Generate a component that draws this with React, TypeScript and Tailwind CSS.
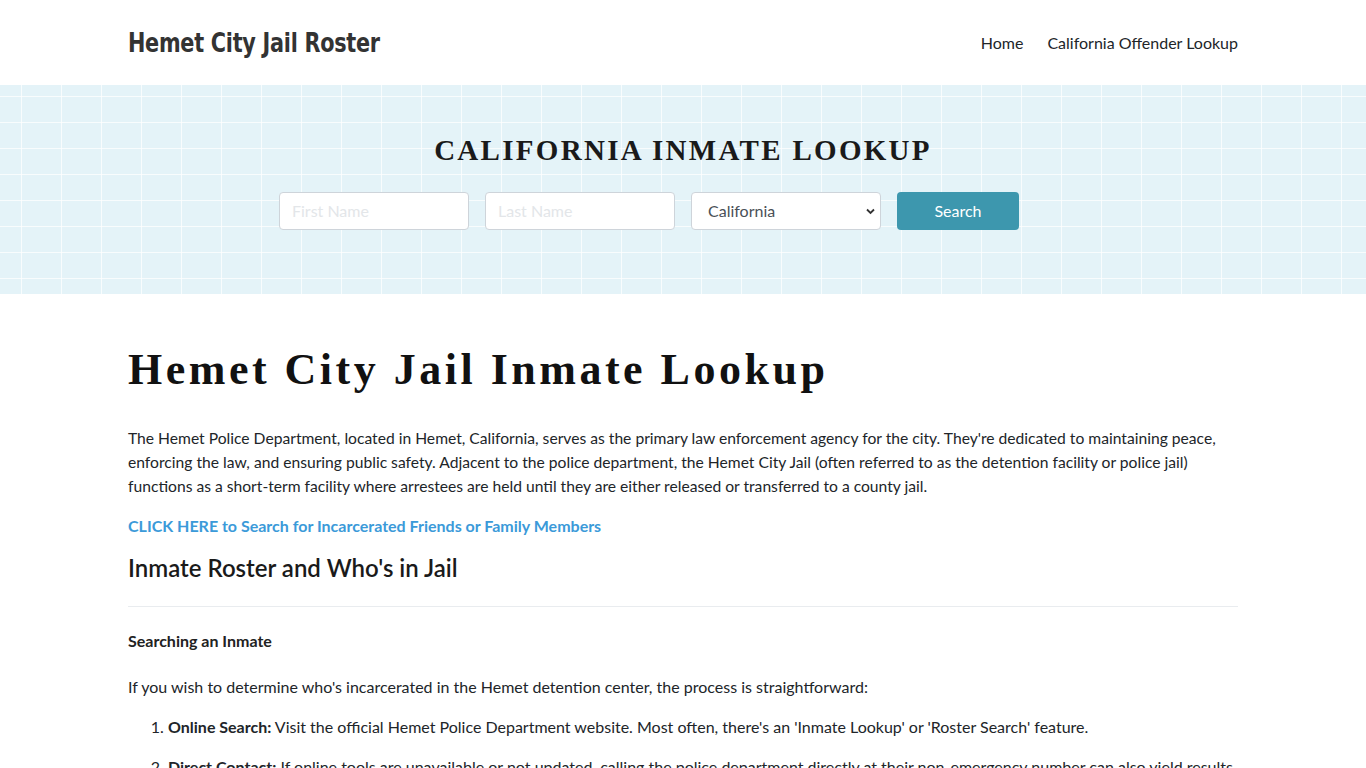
import React from "react";

const lato = { fontFamily: "Lato, 'Open Sans', sans-serif" };

function Header() {
    return (
        <header className="h-[85px] bg-white">
            <div className="mx-auto flex h-full w-[1110px] items-center justify-between">
                <a
                    href="#"
                    className="inline-block origin-left scale-x-[0.855] pt-[2px] text-[27px] font-bold tracking-[-0.3px] text-[#333333] [font-stretch:condensed] [font-family:'DejaVu_Sans',sans-serif]"
                >
                    Hemet City Jail Roster
                </a>
                <nav className="flex items-center gap-6 text-base text-[#212529]">
                    <a href="#">Home</a>
                    <a href="#">California Offender Lookup</a>
                </nav>
            </div>
        </header>
    );
}

function Hero() {
    return (
        <section className="flex h-[209px] flex-col items-center bg-[#e4f3f8] bg-[image:linear-gradient(to_right,rgba(255,255,255,0.75)_1.5px,transparent_1.5px),linear-gradient(to_bottom,rgba(255,255,255,0.75)_1.5px,transparent_1.5px)] bg-[size:40px_26px] bg-[position:21px_11px] pt-[44px]">
            <h2 className="text-[29px] font-bold tracking-[2.3px] text-[#1a1a1a] [font-family:'Liberation_Serif',serif]">
                CALIFORNIA INMATE LOOKUP
            </h2>
            <form className="mr-[68px] mt-[19px] flex gap-4" onSubmit={(e) => e.preventDefault()}>
                <input
                    type="text"
                    placeholder="First Name"
                    className="h-[38px] w-[190px] rounded border border-[#ced4da] bg-white px-3 text-base outline-none placeholder:text-[#e3e6e9]"
                />
                <input
                    type="text"
                    placeholder="Last Name"
                    className="h-[38px] w-[190px] rounded border border-[#ced4da] bg-white px-3 text-base outline-none placeholder:text-[#e3e6e9]"
                />
                <div className="relative">
                    <select className="h-[38px] w-[190px] appearance-none rounded border border-[#ced4da] bg-white pl-4 text-base text-[#495057] outline-none">
                        <option>California</option>
                    </select>
                    <svg
                        className="pointer-events-none absolute right-[6px] top-[16px]"
                        width="9"
                        height="7"
                        viewBox="0 0 9 7"
                        fill="none"
                        stroke="#333"
                        strokeWidth="1.8"
                    >
                        <path d="M1 1.5l3.5 3.5 3.5-3.5" />
                    </svg>
                </div>
                <button
                    type="submit"
                    className="h-[38px] w-[122px] rounded bg-[#3d97ae] text-base text-white"
                >
                    Search
                </button>
            </form>
        </section>
    );
}

export default function App() {
    return (
        <div style={lato} className="min-h-screen bg-white text-[#212529]">
            <Header />
            <Hero />
            <main className="mx-auto w-[1110px] pt-[50px]">
                <h1 className="text-[44px] font-bold leading-[1.2] tracking-[3.5px] text-[#111111] [font-family:'Liberation_Serif',serif]">
                    Hemet City Jail Inmate Lookup
                </h1>
                <p className="mt-[29px] text-[15.65px] leading-6">
                    The Hemet Police Department, located in Hemet, California, serves as the primary law
                    enforcement agency for the city. They're dedicated to maintaining peace, enforcing the
                    law, and ensuring public safety. Adjacent to the police department, the Hemet City Jail
                    (often referred to as the detention facility or police jail) functions as a short-term
                    facility where arrestees are held until they are either released or transferred to a
                    county jail.
                </p>
                <a href="#" className="mt-4 block text-base font-bold leading-6 text-[#3b9ad9]">
                    CLICK HERE to Search for Incarcerated Friends or Family Members
                </a>
                <h3 className="mt-[16px] text-[24px] font-semibold leading-[1.2] text-[#1a1a1a]">
                    Inmate Roster and Who's in Jail
                </h3>
                <hr className="mt-[23px] border-[#e9ecef]" />
                <h4 className="mt-[22px] text-base font-bold leading-6 text-[#222]">Searching an Inmate</h4>
                <p className="mt-[22px] text-base leading-6">
                    If you wish to determine who's incarcerated in the Hemet detention center, the process
                    is straightforward:
                </p>
                <ol className="mt-4 list-decimal pl-[40px] text-base leading-6">
                    <li>
                        <b>Online Search:</b> Visit the official Hemet Police Department website. Most often,
                        there's an 'Inmate Lookup' or 'Roster Search' feature.
                    </li>
                    <li className="mt-4">
                        <b>Direct Contact:</b> If online tools are unavailable or not updated, calling the
                        police department directly at their non-emergency number can also yield results.
                    </li>
                </ol>
            </main>
        </div>
    );
}
